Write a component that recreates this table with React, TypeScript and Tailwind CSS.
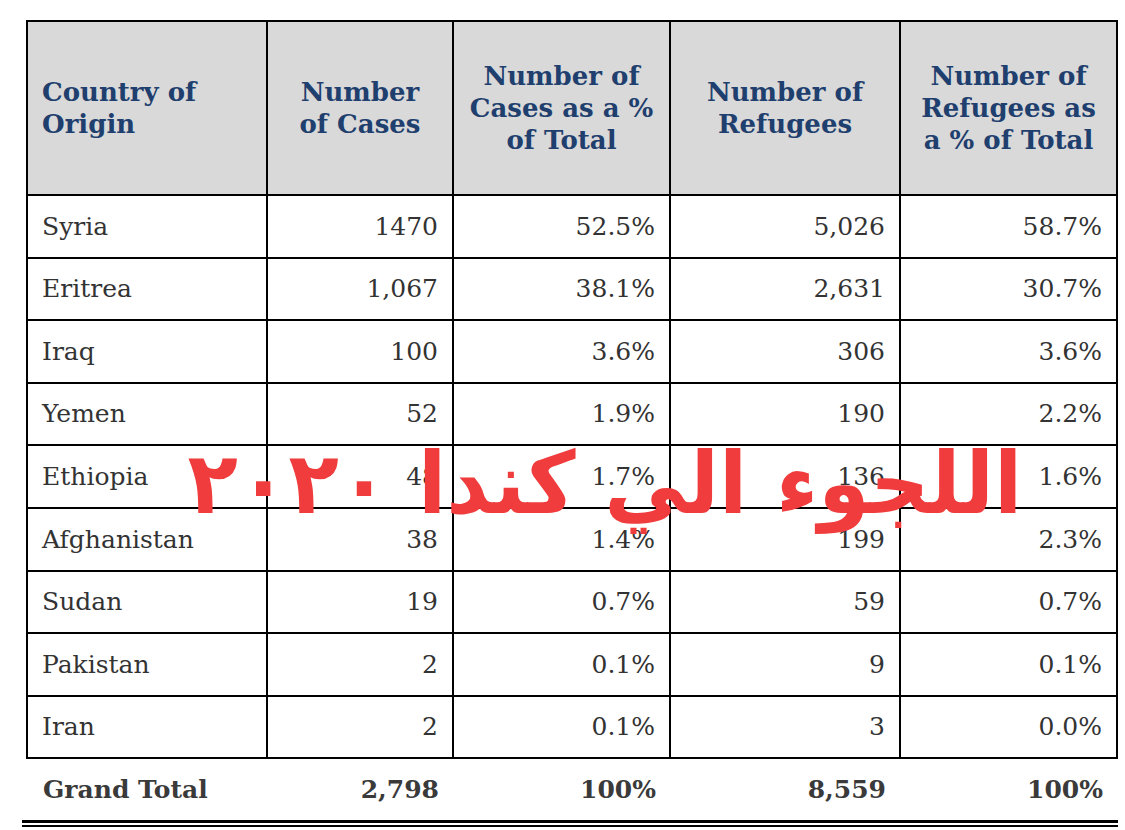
import React from "react";

const rows = [
  ["Syria", "1470", "52.5%", "5,026", "58.7%"],
  ["Eritrea", "1,067", "38.1%", "2,631", "30.7%"],
  ["Iraq", "100", "3.6%", "306", "3.6%"],
  ["Yemen", "52", "1.9%", "190", "2.2%"],
  ["Ethiopia", "48", "1.7%", "136", "1.6%"],
  ["Afghanistan", "38", "1.4%", "199", "2.3%"],
  ["Sudan", "19", "0.7%", "59", "0.7%"],
  ["Pakistan", "2", "0.1%", "9", "0.1%"],
  ["Iran", "2", "0.1%", "3", "0.0%"],
];

const widths = ["w-[240px]", "w-[186px]", "w-[217px]", "w-[230px]", "w-[217px]"];

export default function App() {
  return (
    <div
      className="relative w-[1125px] h-[830px] bg-white overflow-hidden"
      style={{ fontFamily: '"DejaVu Serif", "Liberation Serif", serif' }}
    >
      <div className="pl-[26px] pt-[20px]">
        <table className="border-collapse table-fixed">
          <thead>
            <tr className="h-[174px] bg-[#d9d9d9]">
              <th className={`${widths[0]} border-[2.5px] border-black text-left align-middle pl-[14px] font-bold text-[26px] leading-[32px] text-[#1f3f6e]`}>
                Country of<br />Origin
              </th>
              <th className={`${widths[1]} border-[2.5px] border-black text-center font-bold text-[26px] leading-[32px] text-[#1f3f6e]`}>
                Number<br />of Cases
              </th>
              <th className={`${widths[2]} border-[2.5px] border-black text-center font-bold text-[26px] leading-[32px] text-[#1f3f6e]`}>
                Number of<br />Cases as a %<br />of Total
              </th>
              <th className={`${widths[3]} border-[2.5px] border-black text-center font-bold text-[26px] leading-[32px] text-[#1f3f6e]`}>
                Number of<br />Refugees
              </th>
              <th className={`${widths[4]} border-[2.5px] border-black text-center font-bold text-[26px] leading-[32px] text-[#1f3f6e]`}>
                Number of<br />Refugees as<br />a % of Total
              </th>
            </tr>
          </thead>
          <tbody>
            {rows.map((r) => (
              <tr key={r[0]} className="h-[62.6px] text-[25px] text-[#333333]">
                <td className="border-[2.5px] border-black pl-[14px] text-left">{r[0]}</td>
                <td className="border-[2.5px] border-black pr-[14px] text-right">{r[1]}</td>
                <td className="border-[2.5px] border-black pr-[14px] text-right">{r[2]}</td>
                <td className="border-[2.5px] border-black pr-[14px] text-right">{r[3]}</td>
                <td className="border-[2.5px] border-black pr-[14px] text-right">{r[4]}</td>
              </tr>
            ))}
            <tr className="h-[62px] text-[25px] font-bold text-[#3a3a3a]">
              <td className="pl-[16px] text-left">Grand Total</td>
              <td className="pr-[14px] text-right">2,798</td>
              <td className="pr-[14px] text-right">100%</td>
              <td className="pr-[14px] text-right">8,559</td>
              <td className="pr-[14px] text-right">100%</td>
            </tr>
          </tbody>
        </table>
        <div className="ml-[-4px] w-[1096px] h-[3px] bg-black" />
        <div className="ml-[-4px] w-[1096px] h-[2px] bg-black mt-[2px]" />
      </div>
      <div
        dir="rtl"
        className="absolute left-[150px] top-[418px] w-[910px] text-center text-[#f03c3c] font-bold text-[86px] leading-[130px] whitespace-nowrap scale-x-[0.96]"
        style={{ fontFamily: '"DejaVu Sans", sans-serif' }}
      >
        اللجوء الي كندا ٢٠٢٠
      </div>
    </div>
  );
}
